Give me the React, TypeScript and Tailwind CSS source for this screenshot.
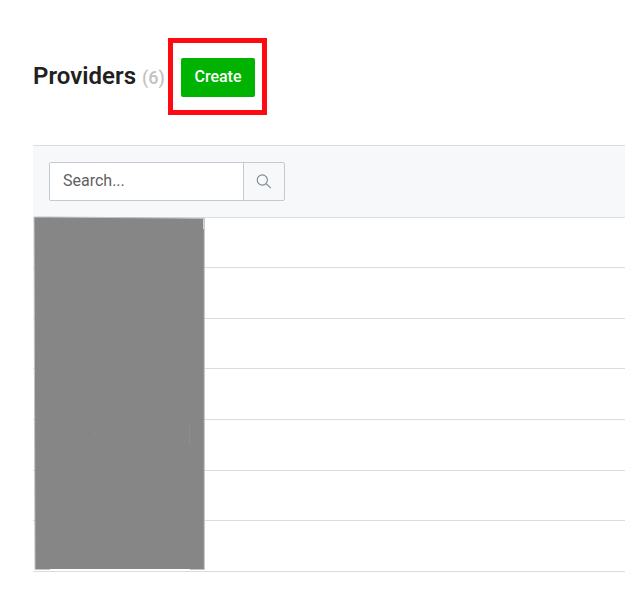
const rows = [
  'h-[50px]',
  'h-[51px]',
  'h-[50px]',
  'h-[51px]',
  'h-[51px]',
  'h-[50px]',
  'h-[51px]',
];

function SearchIcon() {
  return (
    <svg width="16" height="16" viewBox="0 0 16 16" fill="none" stroke="#7d858e" strokeWidth="1.1">
      <circle cx="6.3" cy="6" r="5.1" />
      <path d="M10 9.7L14.8 14.2" />
    </svg>
  );
}

function Header() {
  return (
    <header className="flex h-[145px] items-start pl-[33px]">
      <h1 className="mt-[60px] w-[109px] whitespace-nowrap text-[24px] leading-8 font-semibold tracking-[0.03px] text-[#212121]">
        Providers
      </h1>
      <span className="mt-[62px] w-[39px] text-[18px] leading-8 font-medium text-[#c2c2c2]">(6)</span>
      <div className="relative mt-[58px]">
        <button className="block h-[39px] w-[74px] rounded-[2px] bg-[#00b300] pb-[2px] text-[16px] font-medium text-white">
          Create
        </button>
        <div className="pointer-events-none absolute -top-[20px] -left-[13px] h-[77px] w-[99px] border-[5px] border-[#ff0a12]" />
      </div>
    </header>
  );
}

export default function App() {
  return (
    <main className="h-[595px] w-[625px] overflow-hidden bg-white font-[Roboto,sans-serif]">
      <Header />
      <section className="ml-[33px]">
        <div className="flex h-[73px] border-y border-[#d9dee3] bg-[#f6f8fa] pt-4 pl-4">
          <div className="flex h-[39px] w-[236px] overflow-hidden rounded-[2px] border border-[#c3cad3]">
            <input
              className="w-[193px] bg-white px-[13px] pb-[2px] text-[16px] text-[#616161] outline-none placeholder:text-[#616161]"
              placeholder="Search..."
            />
            <button className="flex flex-1 items-center justify-center border-l border-[#c3cad3]">
              <SearchIcon />
            </button>
          </div>
        </div>
        <div className="relative">
          {rows.map((height, i) => (
            <div key={i} className={`${height} border-b border-[#d9dde1]`} />
          ))}
          <svg className="absolute -top-[2px] left-0" width="173" height="356" viewBox="0 0 173 356">
            <path d="M1 1H16L171.3 2.3V353.5H157V353H17V353.5H2Z" fill="#868686" />
            <path d="M17 353V353.5H2L1 1H16L171.3 2.3V353.5H157V353" fill="none" stroke="#c4c4c4" />
            <path d="M17 353.5H156.5" stroke="white" />
            <path d="M170.5 3V13" stroke="#d5d5d5" />
            <path d="M156.5 208V228M61 217.5H63M156.5 334V337H155" stroke="#929292" strokeWidth=".7" fill="none" />
          </svg>
        </div>
      </section>
    </main>
  );
}
